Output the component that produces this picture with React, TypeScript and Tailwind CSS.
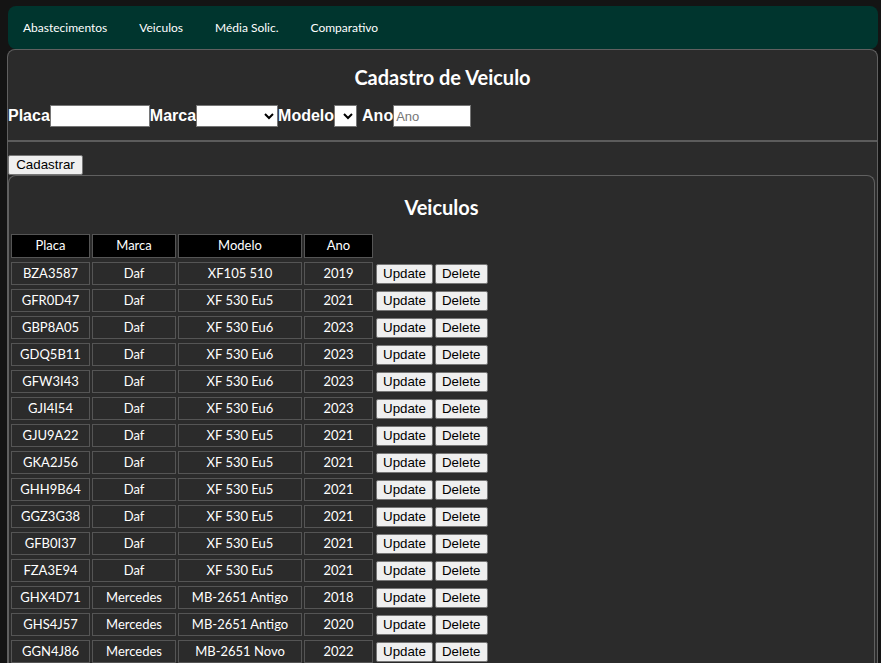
import React from "react"

const veiculos = [
  ["BZA3587", "Daf", "XF105 510", "2019"],
  ["GFR0D47", "Daf", "XF 530 Eu5", "2021"],
  ["GBP8A05", "Daf", "XF 530 Eu6", "2023"],
  ["GDQ5B11", "Daf", "XF 530 Eu6", "2023"],
  ["GFW3I43", "Daf", "XF 530 Eu6", "2023"],
  ["GJI4I54", "Daf", "XF 530 Eu6", "2023"],
  ["GJU9A22", "Daf", "XF 530 Eu5", "2021"],
  ["GKA2J56", "Daf", "XF 530 Eu5", "2021"],
  ["GHH9B64", "Daf", "XF 530 Eu5", "2021"],
  ["GGZ3G38", "Daf", "XF 530 Eu5", "2021"],
  ["GFB0I37", "Daf", "XF 530 Eu5", "2021"],
  ["FZA3E94", "Daf", "XF 530 Eu5", "2021"],
  ["GHX4D71", "Mercedes", "MB-2651 Antigo", "2018"],
  ["GHS4J57", "Mercedes", "MB-2651 Antigo", "2020"],
  ["GGN4J86", "Mercedes", "MB-2651 Novo", "2022"],
]

const gill = "font-['Lato','Open_Sans',sans-serif]"
const arial = "font-['Liberation_Sans',Arial,sans-serif]"
const btn = `${arial} text-[13.33px] text-black bg-[#efefef] border border-[#767676] rounded-[2px] px-[6px] h-[20px] leading-none`

export default function App() {
  return (
    <div className={`min-h-screen bg-[#141414] pt-[6px] pl-[8px] pr-[3px] ${gill} text-white`}>
      {/* Menu */}
      <nav className="h-[43px] bg-[#00352e] rounded-[8px] flex items-center pl-[15px] gap-[32px] text-[12px]">
        <span>Abastecimentos</span>
        <span>Veiculos</span>
        <span>Média Solic.</span>
        <span>Comparativo</span>
      </nav>

      {/* Cadastro */}
      <div className="bg-[#2b2b2b] border border-[#606060] border-b-0 rounded-t-[8px] -ml-px">
        <h1 className="text-[20px] font-bold text-center pt-[15px] pb-[15px] leading-[24px]">Cadastro de Veiculo</h1>
        <div className={`flex items-center ${arial} text-[16px] font-bold h-[24px]`}>
          <span>Placa</span>
          <input className="w-[100px] h-[22px] bg-white border border-[#767676]" />
          <span>Marca</span>
          <select className="w-[82px] h-[22px] bg-white border border-[#767676] text-black text-[13px]">
            <option></option>
          </select>
          <span>Modelo</span>
          <select className="w-[23px] h-[22px] bg-white border border-[#767676] text-black text-[13px]">
            <option></option>
          </select>
          <span className="ml-[5px]">Ano</span>
          <input
            placeholder="Ano"
            className="w-[78px] h-[22px] bg-white border border-[#767676] text-[13px] font-normal px-[2px] placeholder:text-[#757575]"
          />
        </div>
        <hr className="mt-[12px] border-0 h-[2px] bg-[#5c5c5c]" />
        <div className="flex pt-[13px]">
          <button className={`${btn} w-[75px] px-0`}>Cadastrar</button>
        </div>

        {/* Lista */}
        <div className="border border-[#606060] border-b-0 rounded-t-[8px] mr-[2px]">
          <h2 className="text-[20px] font-bold text-center pt-[19px] pb-[11px] leading-[24px]">Veiculos</h2>
          <table className="border-separate border-spacing-x-[2px] border-spacing-y-[4px] text-[13px]">
            <thead>
              <tr>
                <th className="w-[79px] h-[24px] bg-black border border-[#555] font-normal">Placa</th>
                <th className="w-[84px] h-[24px] bg-black border border-[#555] font-normal">Marca</th>
                <th className="w-[124px] h-[24px] bg-black border border-[#555] font-normal">Modelo</th>
                <th className="w-[69px] h-[24px] bg-black border border-[#555] font-normal">Ano</th>
                <th></th>
              </tr>
            </thead>
            <tbody>
              {veiculos.map((v) => (
                <tr key={v[0]}>
                  <td className="h-[23px] border border-[#555] text-center">{v[0]}</td>
                  <td className="h-[23px] border border-[#555] text-center">{v[1]}</td>
                  <td className="h-[23px] border border-[#555] text-center">{v[2]}</td>
                  <td className="h-[23px] border border-[#555] text-center">{v[3]}</td>
                  <td className="p-0 pl-[1px]">
                    <div className="flex gap-[2px]">
                      <button className={btn}>Update</button>
                      <button className={btn}>Delete</button>
                    </div>
                  </td>
                </tr>
              ))}
            </tbody>
          </table>
        </div>
      </div>
    </div>
  )
}
